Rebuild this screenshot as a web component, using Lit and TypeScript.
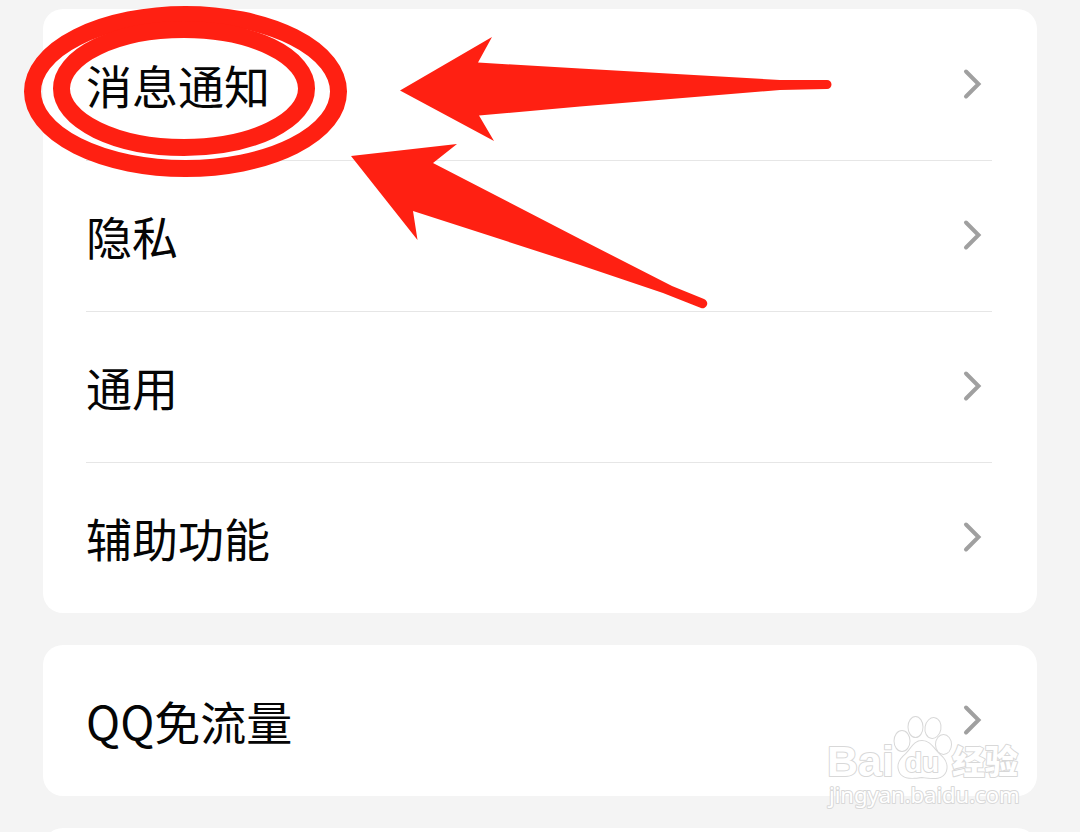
import { LitElement, html, css, svg } from "lit";
import { customElement, property } from "lit/decorators.js";

@customElement("setting-row")
class SettingRow extends LitElement {
  @property() label = "";

  static styles = css`
    :host {
      display: block;
    }
    .row {
      box-sizing: border-box;
      width: 100%;
      min-height: 150px;
      display: flex;
      align-items: center;
      justify-content: space-between;
      padding: 0 10px 2px 0;
      border: 0;
      background: none;
      color: #050505;
      font: inherit;
      text-align: left;
      cursor: pointer;
    }
    .chevron {
      display: block;
      flex: none;
      width: 20px;
      height: 32px;
    }
  `;

  render() {
    return html`<button class="row" type="button">
      <span>${this.label}</span>
      <svg class="chevron" viewBox="0 0 20 32" aria-hidden="true">
        <path d="M4 3.500 L16.500 16 L4 28.500" fill="none" stroke="#a0a0a0" stroke-width="4" stroke-linecap="round" stroke-linejoin="miter" />
      </svg>
    </button>`;
  }
}

const groups: string[][] = [["消息通知", "隐私", "通用", "辅助功能"], ["QQ免流量"], [""]];

const marks = svg`
  <g fill="none" stroke="#ff2012" stroke-width="17">
    <ellipse cx="185.5" cy="91.5" rx="153" ry="77" />
    <ellipse cx="184" cy="88.5" rx="122.5" ry="59" />
  </g>
  <g fill="#ff2012">
    <path d="M400 90.500 L492 37 L478 62.500 L580 68.500 L780 80 L827 80 A4.500 4.500 0 0 1 827 89 L780 90 L580 106.500 L479 115.500 L494 141 Z" />
    <path d="M351 156 L457 144 L433 163 L580 239 L672 286 L704 299 A4.500 4.500 0 0 1 701 308 L663 293 L580 265 L413 211 L417.500 240 Z" />
  </g>`;

@customElement("app-root")
class AppRoot extends LitElement {
  static styles = css`
    :host {
      display: block;
      position: relative;
      height: 100vh;
      overflow: hidden;
      background: #f4f4f4;
      font-family: "Noto Sans CJK SC", sans-serif;
      font-size: 46px;
      line-height: 68px;
    }
    .list {
      display: flex;
      flex-direction: column;
      gap: 32px;
      padding: 9px 43px 0;
    }
    .card {
      padding: 0 45px 0 43px;
      border-radius: 20px;
      background: #fff;
    }
    .item {
      border-top: 1px solid #e6e6e6;
    }
    .item:first-child {
      border-top-color: transparent;
    }
    .marks {
      position: absolute;
      left: 0;
      top: 0;
      width: 840px;
      height: 320px;
      pointer-events: none;
    }
    .watermark {
      position: absolute;
      right: 50px;
      bottom: 16px;
      width: 210px;
      height: 106px;
      pointer-events: none;
    }
    .outlined {
      fill: #fff;
      stroke: #d8d8d8;
      stroke-width: 2px;
      paint-order: stroke;
      stroke-linejoin: round;
    }
    .latin {
      font: bold 43px "Liberation Sans", sans-serif;
    }
    .small {
      font: bold 28px "Liberation Sans", sans-serif;
    }
    .cjk {
      font: 900 33px "Noto Sans CJK SC", sans-serif;
    }
    .site {
      font: 22px "Noto Sans", sans-serif;
    }
  `;

  render() {
    return html`
      <main class="list">
        ${groups.map(
          (group) => html`<section class="card">
            ${group.map((label) => html`<div class="item"><setting-row .label=${label}></setting-row></div>`)}
          </section>`
        )}
      </main>
      <svg class="marks" viewBox="0 0 840 320" aria-hidden="true">${marks}</svg>
      <svg class="watermark" viewBox="820 710 210 106" aria-hidden="true">
        <g class="outlined">
          <text class="latin" x="827" y="776">Bai</text>
          <ellipse cx="902" cy="741" rx="7.500" ry="10" />
          <ellipse cx="915.500" cy="727" rx="7" ry="10" />
          <ellipse cx="933" cy="728" rx="7.500" ry="10" transform="rotate(10 933 728)" />
          <ellipse cx="943.500" cy="744.500" rx="7.500" ry="9.500" />
          <path d="M922 741 C914 741 912 748 906 754 C900 759 897 764 899 770 C901 778 909 779 922 777 C935 779 943 779 946 771 C948 764 945 759 939 754 C933 748 930 741 922 741 Z" />
          <text class="small" x="905" y="772">du</text>
          <text class="cjk" x="952" y="774">经验</text>
          <text class="site" x="829" y="803">jingyan.baidu.com</text>
        </g>
      </svg>
    `;
  }
}
